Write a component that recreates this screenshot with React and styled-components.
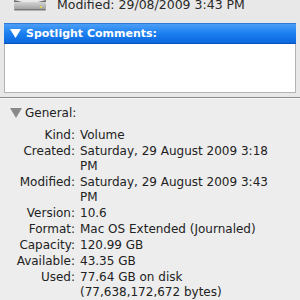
import React from "react";
import styled, { createGlobalStyle } from "styled-components";

const Global = createGlobalStyle`
  html, body { margin: 0; padding: 0; background: #ededed; }
  body { font-family: "DejaVu Sans", "Liberation Sans", sans-serif; }
`;

const Page = styled.div`
  width: 300px;
  height: 300px;
  overflow: hidden;
  display: flex;
  flex-direction: column;
  background: #ededed;
`;

const Upper = styled.div`
  background: #e8e8e8;
  display: flex;
  flex-direction: column;
  padding: 0 4px 4px 4px;
  border-bottom: 1px solid #8c8c8c;
`;

const TopHeader = styled.div`
  height: 12px;
  display: flex;
  align-items: flex-end;
  gap: 10px;
  padding-left: 9px;
  overflow: hidden;
`;

const TopText = styled.div`
  font-size: 12.5px;
  line-height: 14px;
  color: #2a2a2a;
  white-space: nowrap;
  margin-bottom: 0px;
`;

const SectionBar = styled.div`
  margin-top: 11px;
  height: 19px;
  display: flex;
  align-items: center;
  gap: 5px;
  padding-left: 6px;
  color: #fff;
  font-size: 11px;
  font-weight: bold;
  background: linear-gradient(#4b9ef6, #1b7ff0 50%, #0b68dd);
  border-top: 1px solid #2e78d8;
  border-bottom: 1px solid #0a52b8;
  white-space: nowrap;
`;

const CommentBox = styled.div`
  height: 48px;
  background: #fff;
  border: 1px solid #b4b4b4;
  border-top: none;
`;

const Lower = styled.div`
  display: flex;
  flex-direction: column;
  padding: 6px 0 0 0;
  border-top: 1px solid #f6f6f6;
`;

const GeneralHead = styled.div`
  display: flex;
  align-items: center;
  gap: 3px;
  padding-left: 10px;
  height: 15px;
  font-size: 12px;
  color: #222;
`;

const Grid = styled.div`
  margin-top: 8px;
  display: grid;
  grid-template-columns: 75px 1fr;
  column-gap: 5px;
  row-gap: 1px;
  font-size: 12px;
  line-height: 15px;
  color: #222;
`;

const Label = styled.div`
  text-align: right;
  white-space: nowrap;
`;

const Value = styled.div`
  white-space: nowrap;
`;

const Triangle = ({ color, size = 11 }) => (
  <svg width={size} height={size - 2} viewBox="0 0 11 9">
    <polygon points="0,0 11,0 5.5,9" fill={color} />
  </svg>
);

const Disk = () => (
  <svg width="34" height="12" viewBox="0 0 34 12">
    <defs>
      <linearGradient id="face" x1="0" y1="0" x2="0" y2="1">
        <stop offset="0" stopColor="#d4d4d4" />
        <stop offset="1" stopColor="#9c9c9c" />
      </linearGradient>
    </defs>
    <path d="M1 0 Q17 5 33 0 L33 2 Q17 6 1 2 Z" fill="#6f6f6f" />
    <rect x="1" y="2" width="32" height="8" rx="2" fill="url(#face)" />
    <rect x="1" y="9" width="32" height="1.5" rx="1" fill="#7a7a7a" />
    <circle cx="28" cy="7" r="1" fill="#e6df2e" />
  </svg>
);

const rows = [
  ["Kind:", ["Volume"]],
  ["Created:", ["Saturday, 29 August 2009 3:18", "PM"]],
  ["Modified:", ["Saturday, 29 August 2009 3:43", "PM"]],
  ["Version:", ["10.6"]],
  ["Format:", ["Mac OS Extended (Journaled)"]],
  ["Capacity:", ["120.99 GB"]],
  ["Available:", ["43.35 GB"]],
  ["Used:", ["77.64 GB on disk", "(77,638,172,672 bytes)"]],
];

export default function App() {
  return (
    <Page>
      <Global />
      <Upper>
        <TopHeader>
          <Disk />
          <TopText>Modified: 29/08/2009 3:43 PM</TopText>
        </TopHeader>
        <SectionBar>
          <Triangle color="#fff" size={11} />
          Spotlight Comments:
        </SectionBar>
        <CommentBox />
      </Upper>
      <Lower>
        <GeneralHead>
          <Triangle color="#8a8a8a" size={12} />
          General:
        </GeneralHead>
        <Grid>
          {rows.map(([label, lines]) => (
            <React.Fragment key={label}>
              <Label>{label}</Label>
              <Value>
                {lines.map((l, i) => (
                  <div key={i}>{l}</div>
                ))}
              </Value>
            </React.Fragment>
          ))}
        </Grid>
      </Lower>
    </Page>
  );
}
